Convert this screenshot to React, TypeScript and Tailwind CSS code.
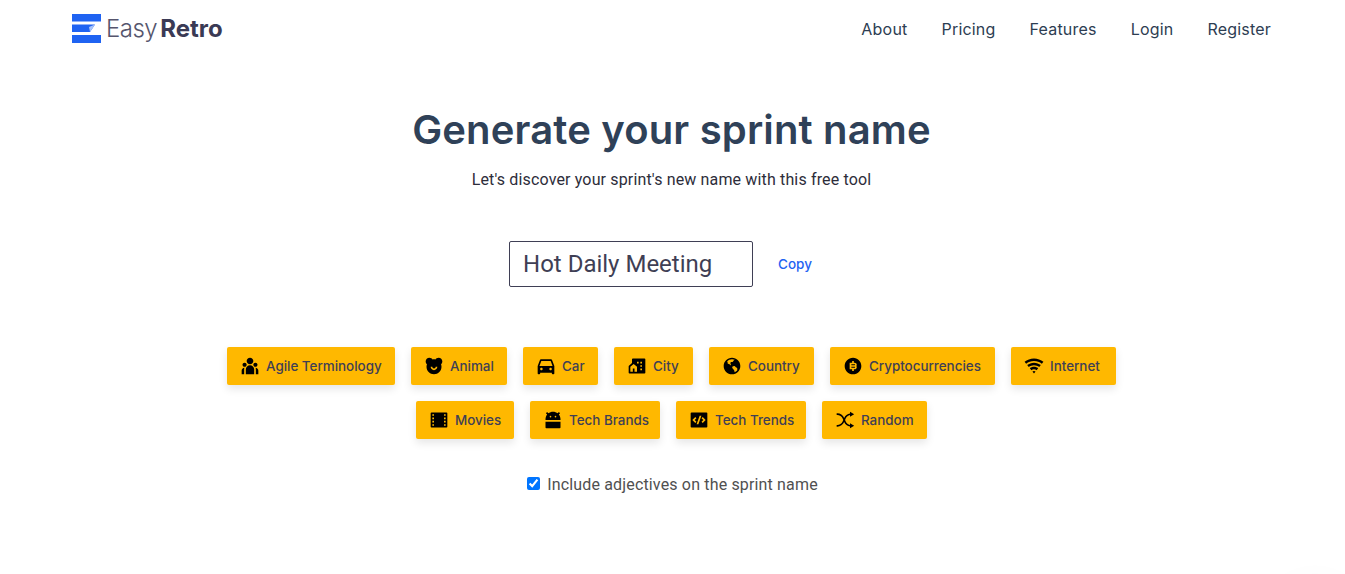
import type { ReactNode } from "react";
import {
  RiAndroidFill,
  RiBearSmileFill,
  RiBitCoinFill,
  RiCarFill,
  RiCodeBoxFill,
  RiCommunityFill,
  RiEarthFill,
  RiFilmFill,
  RiShuffleFill,
  RiTeamFill,
  RiWifiFill,
} from "react-icons/ri";

const navLinks = ["About", "Pricing", "Features", "Login", "Register"];

const firstRow = [
  { label: "Agile Terminology", width: "w-[168px]", icon: <RiTeamFill size={20} /> },
  { label: "Animal", width: "w-[96px]", icon: <RiBearSmileFill size={20} /> },
  { label: "Car", width: "w-[75px]", icon: <RiCarFill size={20} /> },
  { label: "City", width: "w-[79px]", icon: <RiCommunityFill size={20} /> },
  { label: "Country", width: "w-[105px]", icon: <RiEarthFill size={20} /> },
  { label: "Cryptocurrencies", width: "w-[165px]", icon: <RiBitCoinFill size={20} /> },
  { label: "Internet", width: "w-[105px]", icon: <RiWifiFill size={20} /> },
];

const secondRow = [
  { label: "Movies", width: "w-[98px]", icon: <RiFilmFill size={20} /> },
  { label: "Tech Brands", width: "w-[130px]", icon: <RiAndroidFill size={20} /> },
  { label: "Tech Trends", width: "w-[130px]", icon: <RiCodeBoxFill size={20} /> },
  { label: "Random", width: "w-[105px]", icon: <RiShuffleFill size={20} /> },
];

function Logo() {
  return (
    <div className="flex items-center gap-[4px]">
      <svg width="30" height="30" viewBox="0 0 30 30" aria-hidden="true">
        <rect x="0" y="0" width="29" height="7.5" fill="#1f63f2" />
        <path d="M0 10.5h23l-5 7.5H0z" fill="#1f63f2" />
        <path d="M23 10.5l-5 7.5-1-5z" fill="#a9c4fa" />
        <rect x="0" y="21" width="29" height="8" fill="#1f63f2" />
      </svg>
      <div className="flex items-baseline text-[24px] leading-none text-[#3a3a55] font-['Inter',sans-serif]">
        <span className="font-light tracking-[-0.5px] text-[#55556d]">Easy</span>
        <span className="ml-[3px] font-bold">Retro</span>
      </div>
    </div>
  );
}

function CategoryButton({ label, width, icon }: { label: string; width: string; icon: ReactNode }) {
  return (
    <button className={`flex h-[38px] items-center gap-[6px] rounded-[2px] bg-[#ffb800] pl-[13px] text-[13.4px] font-medium text-[#3f3f55] shadow-[0_4px_8px_rgba(0,0,0,0.1)] ${width}`}>
      <span className="text-black">{icon}</span>
      {label}
    </button>
  );
}

export default function App() {
  return (
    <div className="relative h-[574px] overflow-hidden bg-white font-['Inter',sans-serif]">
      <header className="flex h-[58px] items-center justify-between pl-[72px] pr-[74px]">
        <Logo />
        <nav className="flex gap-[34px] text-[16px] tracking-[0.2px] text-[#2d3d52]">
          {navLinks.map((link) => (
            <a key={link} href="#">
              {link}
            </a>
          ))}
        </nav>
      </header>

      <main className="flex flex-col items-center pr-[2px]">
        <h1 className="mt-[44px] text-[40px] font-semibold leading-[56px] tracking-[0.16px] text-[#2f4158]">
          Generate your sprint name
        </h1>
        <p className="mt-[10px] font-['Roboto',sans-serif] text-[16px] leading-[24px] tracking-[0.15px] text-[#2d2d3a]">
          Let's discover your sprint's new name with this free tool
        </p>

        <div className="mt-[49px] flex items-center gap-[25px] pr-[22px]">
          <div className="flex h-[46px] w-[244px] items-center rounded-[2px] border border-[#3f3f55] px-[13px] font-['Roboto',sans-serif] text-[24px] text-[#3f3f55]">
            Hot Daily Meeting
          </div>
          <a href="#" className="mt-[1px] text-[13.5px] font-medium text-[#1f63f2]">
            Copy
          </a>
        </div>

        <div className="mt-[60px] flex gap-[16px]">
          {firstRow.map((item) => (
            <CategoryButton key={item.label} {...item} />
          ))}
        </div>
        <div className="mt-[16px] flex gap-[16px]">
          {secondRow.map((item) => (
            <CategoryButton key={item.label} {...item} />
          ))}
        </div>

        <label className="ml-[2px] mt-[34px] flex items-center gap-[7px] font-['Roboto',sans-serif] text-[16px] tracking-[0.16px] text-[#505050]">
          <input type="checkbox" defaultChecked className="mb-[3px] h-[13px] w-[13px]" />
          Include adjectives on the sprint name
        </label>
      </main>

      <div className="absolute left-[1285px] top-[590px] h-[60px] w-[60px] rounded-full shadow-[0_0_40px_rgba(0,0,0,0.06)]" />
    </div>
  );
}
